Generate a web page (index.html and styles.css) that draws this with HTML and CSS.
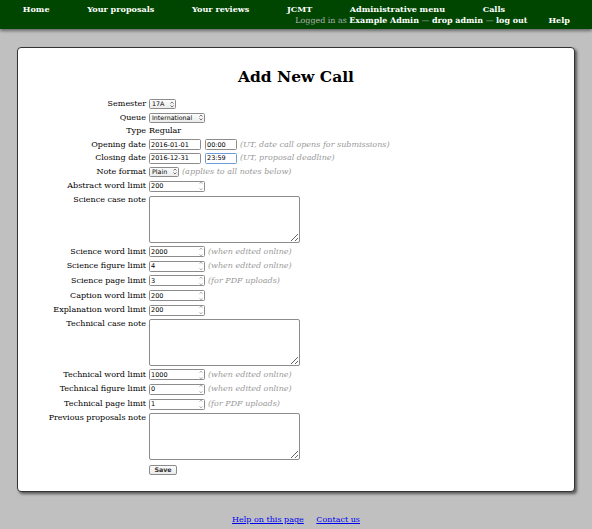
FILE: index.html
```html
<!DOCTYPE html>
<html>
<head>
<meta charset="utf-8">
<title>Add New Call</title>
<link rel="stylesheet" href="styles.css">
</head>
<body>
<nav class="topnav">
  <div class="navrow">
    <a href="#">Home</a>
    <a href="#">Your proposals</a>
    <a href="#">Your reviews</a>
    <a href="#">JCMT</a>
    <a href="#">Administrative menu</a>
    <a href="#">Calls</a>
  </div>
  <div class="navrow navright">
    <span class="login">Logged in as <a href="#">Example Admin</a> — <a href="#">drop admin</a> — <a href="#">log out</a></span>
    <a href="#" class="help">Help</a>
  </div>
</nav>
<main class="box">
  <h1>Add New Call</h1>
  <form class="form">
    <label>Semester</label>
    <div class="field"><span class="selwrap"><select class="sel sel-sem"><option>17A</option></select><svg class="arr" viewBox="0 0 4 7" width="4" height="7"><path d="M0.5 2.5L2 1L3.5 2.5M0.5 4.5L2 6L3.5 4.5" fill="none" stroke="#555" stroke-width="0.8"/></svg></span></div>
    <label>Queue</label>
    <div class="field"><span class="selwrap"><select class="sel sel-queue"><option>International</option></select><svg class="arr" viewBox="0 0 4 7" width="4" height="7"><path d="M0.5 2.5L2 1L3.5 2.5M0.5 4.5L2 6L3.5 4.5" fill="none" stroke="#555" stroke-width="0.8"/></svg></span></div>
    <label>Type</label>
    <div class="field">Regular</div>
    <label>Opening date</label>
    <div class="field"><input class="date" type="text" value="2016-01-01"><input class="time" type="text" value="00:00"><span class="hint">(UT, date call opens for submissions)</span></div>
    <label>Closing date</label>
    <div class="field"><input class="date" type="text" value="2016-12-31"><input class="time focus" type="text" value="23:59"><span class="hint">(UT, proposal deadline)</span></div>
    <label>Note format</label>
    <div class="field"><span class="selwrap"><select class="sel sel-fmt"><option>Plain</option></select><svg class="arr" viewBox="0 0 4 7" width="4" height="7"><path d="M0.5 2.5L2 1L3.5 2.5M0.5 4.5L2 6L3.5 4.5" fill="none" stroke="#555" stroke-width="0.8"/></svg></span><span class="hint">(applies to all notes below)</span></div>
    <label>Abstract word limit</label>
    <div class="field nf"><span class="numwrap"><input class="num" type="number" value="200"><svg class="spin" viewBox="0 0 4 10" width="4" height="10"><path d="M0.7 2.6L2 1.2L3.3 2.6M0.7 7.4L2 8.8L3.3 7.4" fill="none" stroke="#777" stroke-width="0.7"/></svg></span></div>
    <label class="tl">Science case note</label>
    <div class="field ta first"><textarea></textarea></div>
    <label>Science word limit</label>
    <div class="field nf"><span class="numwrap"><input class="num" type="number" value="2000"><svg class="spin" viewBox="0 0 4 10" width="4" height="10"><path d="M0.7 2.6L2 1.2L3.3 2.6M0.7 7.4L2 8.8L3.3 7.4" fill="none" stroke="#777" stroke-width="0.7"/></svg></span><span class="hint">(when edited online)</span></div>
    <label>Science figure limit</label>
    <div class="field nf"><span class="numwrap"><input class="num" type="number" value="4"><svg class="spin" viewBox="0 0 4 10" width="4" height="10"><path d="M0.7 2.6L2 1.2L3.3 2.6M0.7 7.4L2 8.8L3.3 7.4" fill="none" stroke="#777" stroke-width="0.7"/></svg></span><span class="hint">(when edited online)</span></div>
    <label>Science page limit</label>
    <div class="field nf"><span class="numwrap"><input class="num" type="number" value="3"><svg class="spin" viewBox="0 0 4 10" width="4" height="10"><path d="M0.7 2.6L2 1.2L3.3 2.6M0.7 7.4L2 8.8L3.3 7.4" fill="none" stroke="#777" stroke-width="0.7"/></svg></span><span class="hint">(for PDF uploads)</span></div>
    <label>Caption word limit</label>
    <div class="field nf"><span class="numwrap"><input class="num" type="number" value="200"><svg class="spin" viewBox="0 0 4 10" width="4" height="10"><path d="M0.7 2.6L2 1.2L3.3 2.6M0.7 7.4L2 8.8L3.3 7.4" fill="none" stroke="#777" stroke-width="0.7"/></svg></span></div>
    <label>Explanation word limit</label>
    <div class="field nf"><span class="numwrap"><input class="num" type="number" value="200"><svg class="spin" viewBox="0 0 4 10" width="4" height="10"><path d="M0.7 2.6L2 1.2L3.3 2.6M0.7 7.4L2 8.8L3.3 7.4" fill="none" stroke="#777" stroke-width="0.7"/></svg></span></div>
    <label class="tl">Technical case note</label>
    <div class="field ta"><textarea></textarea></div>
    <label>Technical word limit</label>
    <div class="field nf"><span class="numwrap"><input class="num" type="number" value="1000"><svg class="spin" viewBox="0 0 4 10" width="4" height="10"><path d="M0.7 2.6L2 1.2L3.3 2.6M0.7 7.4L2 8.8L3.3 7.4" fill="none" stroke="#777" stroke-width="0.7"/></svg></span><span class="hint">(when edited online)</span></div>
    <label>Technical figure limit</label>
    <div class="field nf"><span class="numwrap"><input class="num" type="number" value="0"><svg class="spin" viewBox="0 0 4 10" width="4" height="10"><path d="M0.7 2.6L2 1.2L3.3 2.6M0.7 7.4L2 8.8L3.3 7.4" fill="none" stroke="#777" stroke-width="0.7"/></svg></span><span class="hint">(when edited online)</span></div>
    <label>Technical page limit</label>
    <div class="field nf"><span class="numwrap"><input class="num" type="number" value="1"><svg class="spin" viewBox="0 0 4 10" width="4" height="10"><path d="M0.7 2.6L2 1.2L3.3 2.6M0.7 7.4L2 8.8L3.3 7.4" fill="none" stroke="#777" stroke-width="0.7"/></svg></span><span class="hint">(for PDF uploads)</span></div>
    <label class="tl">Previous proposals note</label>
    <div class="field ta"><textarea></textarea></div>
    <span></span>
    <div class="field"><button type="button" class="save">Save</button></div>
  </form>
</main>
<footer class="footer">
  <a href="#">Help on this page</a>
  <a href="#">Contact us</a>
</footer>
</body>
</html>
```

FILE: styles.css
```css
html, body {
  margin: 0;
  padding: 0;
}
body {
  background: #c0c0c0;
  font-family: "DejaVu Serif", serif;
  font-size: 8px;
  color: #000;
}
.topnav {
  background: #004600;
  height: 29px;
  box-sizing: border-box;
  padding: 4px 0 0 0;
  box-shadow: 0 2px 3px rgba(0,0,0,0.45);
  font-size: 8.1px;
  font-weight: bold;
  line-height: 10px;
}
.topnav a {
  color: #fff;
  text-decoration: none;
}
.navrow {
  display: flex;
  padding-left: 4px;
}
.navrow > a {
  padding: 0 18.8px;
}
.navright {
  justify-content: flex-end;
  align-items: baseline;
  padding-right: 3px;
  margin-top: 0.5px;
}
.login {
  color: #b0b0b0;
  font-weight: normal;
  font-size: 7.95px;
}
.login a {
  font-weight: bold;
}
.navright .help {
  padding: 0 19px 0 21px;
}
.box {
  display: block;
  margin: 18px 17px 0 17px;
  background: #fff;
  border: 1px solid #333;
  border-radius: 4px;
  box-shadow: 2px 2px 3px rgba(0,0,0,0.55);
  height: 445px;
  box-sizing: border-box;
  padding: 1px 0 0 0;
}
h1 {
  text-align: center;
  font-size: 15.5px;
  margin: 18px 0 12px 0;
  line-height: 20px;
}
.form {
  display: grid;
  grid-template-columns: 128px 1fr;
  column-gap: 3px;
  row-gap: 3.6px;
  align-items: center;
}
.form label {
  text-align: right;
  line-height: 10px;
}
.form label.tl {
  align-self: start;
}
.field {
  display: flex;
  align-items: center;
  height: 10px;
  line-height: 10px;
}
.field.nf {
  height: 11px;
}
.field.ta {
  height: auto;
}
.field.first {
  padding-top: 1px;
}
input, select, textarea, button {
  font-family: "DejaVu Sans", sans-serif;
  font-size: 6.5px;
  box-sizing: border-box;
  margin: 0;
  color: #000;
}
input[type=text], input[type=number] {
  height: 11px;
  border: 1px solid #8c8c8c;
  border-radius: 1.5px;
  padding: 0 1px;
  background: #fff;
  outline: none;
  flex: none;
}
input[type=number] {
  -moz-appearance: textfield;
}
input[type=number]::-webkit-inner-spin-button,
input[type=number]::-webkit-outer-spin-button {
  -webkit-appearance: none;
  margin: 0;
}
input.date { width: 52px; }
input.time { width: 32px; margin-left: 4px; }
input.focus { border-color: #6a9bd8; }
.numwrap, .selwrap {
  position: relative;
  display: inline-flex;
}
input.num { width: 56px; padding-right: 8px; }
.spin {
  position: absolute;
  right: 2px;
  top: 0.5px;
}
.sel {
  -webkit-appearance: none;
  appearance: none;
  height: 10px;
  border: 1px solid #8c8c8c;
  border-radius: 1.5px;
  background: linear-gradient(#fbfbfb, #ececec);
  padding: 0 9px 0 2px;
  line-height: 8px;
  font-size: 6.3px;
}
.arr {
  position: absolute;
  right: 2.5px;
  top: 1.5px;
}
.sel-sem { width: 27px; }
.sel-queue { width: 56px; }
.sel-fmt { width: 30px; }
textarea {
  width: 151px;
  height: 46.5px;
  border: 1px solid #8c8c8c;
  border-radius: 2px;
  margin: 0;
  resize: both;
  display: block;
}
.hint {
  color: #999;
  font-style: italic;
  margin-left: 3px;
}
.save {
  height: 10px;
  width: 28px;
  border: 1px solid #8c8c8c;
  border-radius: 2px;
  background: linear-gradient(#fbfbfb, #ececec);
  padding: 0;
  margin-top: 3px;
  font-weight: bold;
  font-size: 6.3px;
  color: #333;
}
.footer {
  text-align: center;
  padding-top: 23px;
  font-size: 8px;
}
.footer a {
  color: #0000ee;
  margin: 0 5px;
}
```
